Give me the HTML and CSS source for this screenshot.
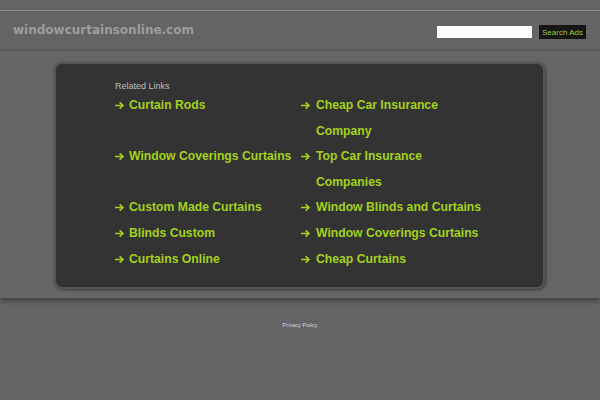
FILE: index.html
```html
<!DOCTYPE html>
<html lang="en">
<head>
    <meta charset="UTF-8">
    <title>windowcurtainsonline.com</title>
    <link rel="stylesheet" href="styles.css">
</head>
<body>
    <div class="header">
        <div class="logo">windowcurtainsonline.com</div>
        <form class="search">
            <input type="text" class="search-input">
            <button type="button" class="search-btn">Search Ads</button>
        </form>
    </div>

    <div class="main">
        <div class="panel">
            <div class="panel-title">Related Links</div>
            <ul class="links">
                <li><svg class="arrow" viewBox="0 0 9 7"><path d="M0 3.5H8M4.6 0.4L8 3.5 4.6 6.6"/></svg><a href="#">Curtain Rods</a></li>
                <li><svg class="arrow" viewBox="0 0 9 7"><path d="M0 3.5H8M4.6 0.4L8 3.5 4.6 6.6"/></svg><a href="#">Cheap Car Insurance Company</a></li>
                <li><svg class="arrow" viewBox="0 0 9 7"><path d="M0 3.5H8M4.6 0.4L8 3.5 4.6 6.6"/></svg><a href="#">Window Coverings Curtains</a></li>
                <li><svg class="arrow" viewBox="0 0 9 7"><path d="M0 3.5H8M4.6 0.4L8 3.5 4.6 6.6"/></svg><a href="#">Top Car Insurance Companies</a></li>
                <li><svg class="arrow" viewBox="0 0 9 7"><path d="M0 3.5H8M4.6 0.4L8 3.5 4.6 6.6"/></svg><a href="#">Custom Made Curtains</a></li>
                <li><svg class="arrow" viewBox="0 0 9 7"><path d="M0 3.5H8M4.6 0.4L8 3.5 4.6 6.6"/></svg><a href="#">Window Blinds and Curtains</a></li>
                <li><svg class="arrow" viewBox="0 0 9 7"><path d="M0 3.5H8M4.6 0.4L8 3.5 4.6 6.6"/></svg><a href="#">Blinds Custom</a></li>
                <li><svg class="arrow" viewBox="0 0 9 7"><path d="M0 3.5H8M4.6 0.4L8 3.5 4.6 6.6"/></svg><a href="#">Window Coverings Curtains</a></li>
                <li><svg class="arrow" viewBox="0 0 9 7"><path d="M0 3.5H8M4.6 0.4L8 3.5 4.6 6.6"/></svg><a href="#">Curtains Online</a></li>
                <li><svg class="arrow" viewBox="0 0 9 7"><path d="M0 3.5H8M4.6 0.4L8 3.5 4.6 6.6"/></svg><a href="#">Cheap Curtains</a></li>
            </ul>
        </div>
    </div>

    <div class="footer">
        <a href="#">Privacy Policy</a>
    </div>
</body>
</html>
```

FILE: styles.css
```css
body {
    margin: 0;
    background-color: #646464;
    font-family: "Liberation Sans", Arial, sans-serif;
}
.header {
    margin-top: 10px;
    border-top: 1px solid #8e8e8e;
    border-bottom: 1px solid #575757;
    height: 39px;
    display: flex;
    align-items: center;
    justify-content: space-between;
    padding: 0 14px 0 13px;
}
.logo {
    font-family: "DejaVu Sans", Verdana, sans-serif;
    font-weight: bold;
    font-size: 12px;
    color: #9d9d9d;
    margin-top: -1px;
}
.search {
    display: flex;
    align-items: center;
    gap: 7px;
    margin: 3px 0 0;
}
.search-input {
    width: 95px;
    height: 12px;
    padding: 0;
    border: none;
    background: #fff;
}
.search-btn {
    background-color: #151515;
    color: #9fc93c;
    border: none;
    font-family: "Liberation Sans", Arial, sans-serif;
    font-size: 8px;
    height: 14px;
    width: 47px;
    padding: 0;
    cursor: pointer;
}
.main {
    background-color: #666;
    padding: 11px 0 9px;
    box-shadow: 0 3px 5px rgba(0, 0, 0, 0.35);
}
.panel {
    width: 491px;
    margin-left: 54px;
    background-color: #333;
    border: 2px solid #555;
    border-radius: 8px;
    box-shadow: 1px 1px 3px rgba(0, 0, 0, 0.4);
    padding: 17px 0 0 59px;
    box-sizing: border-box;
    height: 227px;
}
.panel-title {
    font-size: 9px;
    color: #bdbdbd;
    margin-bottom: 2px;
}
.links {
    list-style: none;
    margin: 0;
    padding: 0;
    display: grid;
    grid-template-columns: 186px 186px;
}
.links li {
    position: relative;
    padding-left: 14px;
    line-height: 25.6px;
    font-size: 12.2px;
    font-weight: bold;
}
.links li:nth-child(even) {
    padding-left: 15px;
}
.arrow {
    position: absolute;
    left: 0;
    top: 9px;
    width: 9px;
    height: 7px;
    overflow: visible;
}
.arrow path {
    fill: none;
    stroke: #a3d11c;
    stroke-width: 1.6;
}
.links a {
    color: #a3d11c;
    text-decoration: none;
}
.footer {
    text-align: center;
    padding-top: 24px;
    font-size: 5.6px;
}
.footer a {
    color: #d8d8d8;
}
```
